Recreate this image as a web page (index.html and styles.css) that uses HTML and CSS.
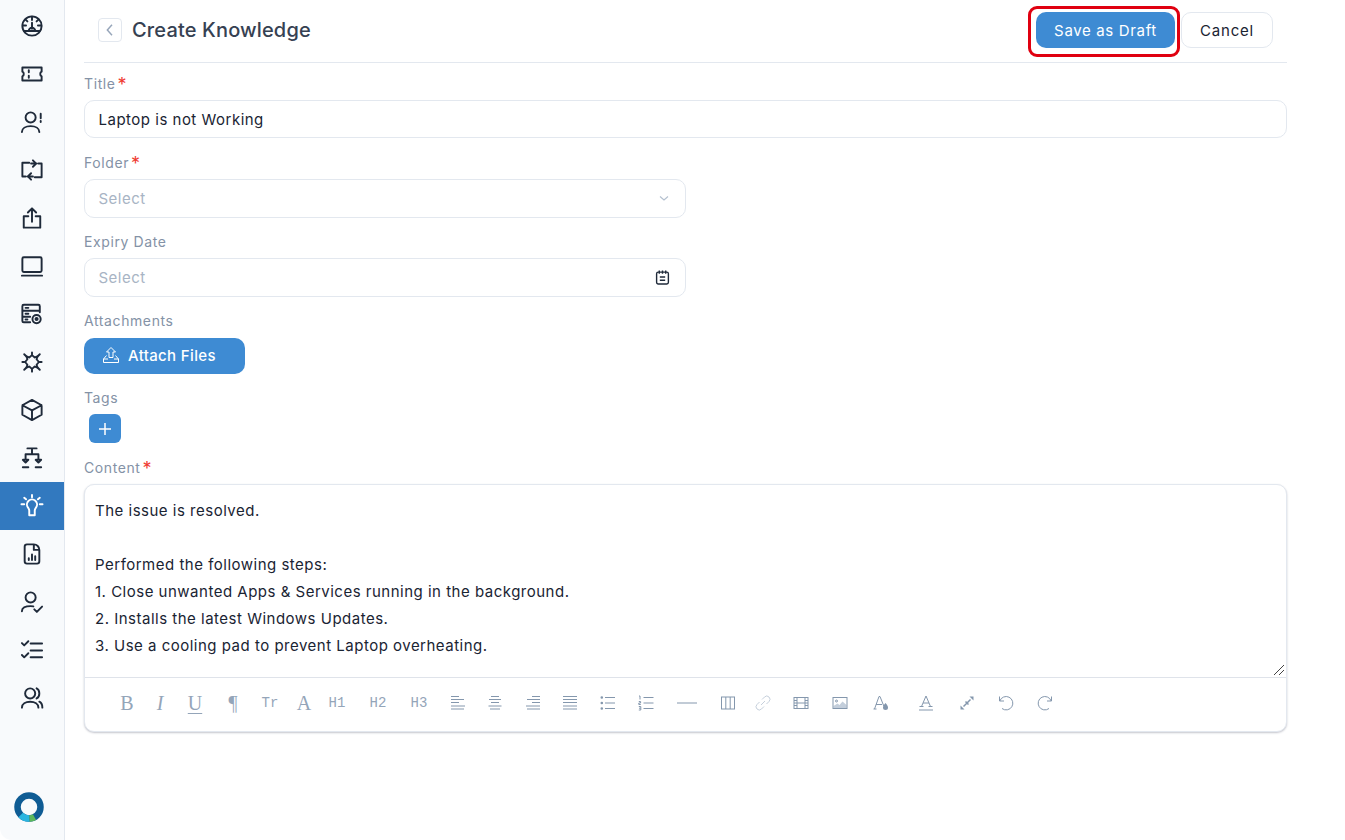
FILE: index.html
```html
<!DOCTYPE html>
<html lang="en">
<head>
<meta charset="utf-8">
<title>Create Knowledge</title>
<link rel="stylesheet" href="styles.css">
</head>
<body>
<div class="app">
  <nav class="sidebar">
    <ul class="nav-list">
      <li class="nav-item"><svg class="nav-icon" viewBox="0 0 24 24"><circle cx="12" cy="12" r="10.500"/><path d="M12 2v3.500M2 11.500h3.500M18.500 11.500H22M5 5l2 2M19 5l-2 2M12 8.500V15"/><path d="M3.500 17.500h17M8.500 17.500a3.500 3.500 0 0 1 7 0"/></svg></li>
      <li class="nav-item"><svg class="nav-icon" viewBox="0 0 24 24"><path d="M1.500 5h21v4.500a2.500 2.500 0 0 0-1.500 2.500 2.500 2.500 0 0 0 1.500 2.500V19h-21v-4.500A2.500 2.500 0 0 0 3 12a2.500 2.500 0 0 0-1.500-2.500z"/><path d="M8.500 8v2M8.500 14v2"/></svg></li>
      <li class="nav-item"><svg class="nav-icon" viewBox="0 0 24 24"><circle cx="10.500" cy="7" r="5.500"/><path d="M1 23c0-4 4-6.500 9.500-6.500S20 19 20 23M21.500 3v5M21.500 11v1"/></svg></li>
      <li class="nav-item"><svg class="nav-icon" viewBox="0 0 24 24"><path d="M9 4H1.500v15H5M15 20h7.500V5H19M11 5h6M13 1.500 16.500 5 13 8.500M13 19H7M11 15.500 7.500 19l3.500 3.500"/></svg></li>
      <li class="nav-item"><svg class="nav-icon" viewBox="0 0 24 24"><path d="M8 10H3v12.500h18V10h-5M12 16V1.500M7.500 6 12 1.500 16.500 6"/></svg></li>
      <li class="nav-item"><svg class="nav-icon" viewBox="0 0 24 24"><rect x="1.500" y="2.500" width="21" height="16" rx="1.500"/><path d="M1 22.500h22"/></svg></li>
      <li class="nav-item"><svg class="nav-icon" viewBox="0 0 24 24"><path d="M10 21H3a1.500 1.500 0 0 1-1.500-1.500v-16A1.500 1.500 0 0 1 3 2h16a1.500 1.500 0 0 1 1.500 1.500V10M1.500 8.500h19M1.500 15H10M5 5.300h3M5 11.800h3M5 18h2"/><circle cx="17" cy="17.500" r="1.200"/><circle cx="17" cy="17.500" r="4.500"/></svg></li>
      <li class="nav-item"><svg class="nav-icon" viewBox="0 0 24 24"><path d="M12 4.500 15 7l3-1-1 3 2.500 3-2.500 3 1 3-3-1-3 2.500L9 17l-3 1 1-3-2.500-3L7 9 6 6l3 1z"/><path d="M12 1.500v2M12 20.500v2M1.500 12h2M20.500 12h2M3.500 3.500 6 6M20.500 3.500 18 6M3.500 20.500 6 18M20.500 20.500 18 18"/></svg></li>
      <li class="nav-item"><svg class="nav-icon" viewBox="0 0 24 24"><path d="M12 1 22.500 6.800v10.400L12 23 1.500 17.200V6.800zM1.500 6.800 12 12.500 22.500 6.800M12 12.500V23"/></svg></li>
      <li class="nav-item"><svg class="nav-icon" viewBox="0 0 24 24"><path d="M7 1.500h10M12 1.500V8M5 13V8h14v5M2 14h6l-3 3zM16 14h6l-3 3zM2 22h6M16 22h6"/></svg></li>
      <li class="nav-item is-active"><svg class="nav-icon" viewBox="0 0 24 24"><path d="M7.500 13.500a5.500 5.500 0 1 1 9 0c-.9 1.200-1.500 2-1.500 3.500v5H9v-5c0-1.500-.6-2.300-1.500-3.500zM12 0v2.500M3.500 3l2 1.700M20.500 3l-2 1.700M.5 10h3M20.500 10h3"/></svg></li>
      <li class="nav-item"><svg class="nav-icon" viewBox="0 0 24 24"><path d="M14 1.500H6.500a2.500 2.500 0 0 0-2.500 2.500v16a2.500 2.500 0 0 0 2.500 2.500h11a2.500 2.500 0 0 0 2.500-2.500V7.500A6 6 0 0 0 14 1.500zM14 1.500V7.500h6M8.500 18.500v-2M12 18.500v-6M15.500 18.500v-4"/></svg></li>
      <li class="nav-item"><svg class="nav-icon" viewBox="0 0 24 24"><circle cx="10.500" cy="7" r="5.500"/><path d="M1 22c0-3.500 3.500-5.500 9.500-5.500 1 0 2 .1 3 .3M14.500 20l2.800 2.800 5.700-5.800"/></svg></li>
      <li class="nav-item"><svg class="nav-icon" viewBox="0 0 24 24"><path d="M10.500 5h12.500M10.500 12.500h12.500M10.500 20h12.500M1 4.500l2.500 2.500L8 2.500M1 17.500 3.500 20 8 15.500"/></svg></li>
      <li class="nav-item"><svg class="nav-icon" viewBox="0 0 24 24"><circle cx="10" cy="7" r="5.500"/><path d="M1 22.500c0-4 4-6.500 9-6.500s9 2.500 9 6.500M17 1.500c2 1 3 3 3 5.500s-1 4.500-3 5.500M20 16c2 1 3.300 3.500 3.300 6.500"/></svg></li>
    </ul>
    <svg class="logo" viewBox="0 0 30 30"><circle class="logo-dark" cx="15" cy="15" r="11.500"/><path class="logo-cyan" d="M6.700 23A11.500 11.500 0 0 0 15.500 26.500"/><path class="logo-green" d="M15.500 26.500A11.500 11.500 0 0 0 20.500 25.100"/></svg>
  </nav>

  <main class="main">
    <header class="page-head">
      <div class="head-left">
        <button class="back-btn" type="button"><svg viewBox="0 0 24 24"><path d="M15 4l-7 8 7 8"/></svg></button>
        <h1 class="page-title">Create Knowledge</h1>
      </div>
      <div class="head-actions">
        <div class="draft-wrap">
          <button class="btn btn-primary btn-draft" type="button">Save as Draft</button>
          <span class="highlight"></span>
        </div>
        <button class="btn btn-cancel" type="button">Cancel</button>
      </div>
    </header>

    <form class="form">
      <div class="field">
        <label class="label">Title<span class="req">*</span></label>
        <div class="input input-full"><span class="value">Laptop is not Working</span></div>
      </div>
      <div class="field">
        <label class="label">Folder<span class="req">*</span></label>
        <div class="input input-half"><span class="placeholder">Select</span>
          <svg class="chev" viewBox="0 0 12 12"><path d="M2 4.500l4 3.500 4-3.500"/></svg></div>
      </div>
      <div class="field">
        <label class="label">Expiry Date</label>
        <div class="input input-half"><span class="placeholder">Select</span>
          <svg class="cal" viewBox="0 0 14 14"><rect x="1.500" y="2" width="11" height="11" rx="1.500"/><path d="M4 .5v3M7 .5v3M10 .5v3M4.500 6.500h5M4.500 9.500h5"/></svg></div>
      </div>
      <div class="field field-attach">
        <label class="label">Attachments</label>
        <button class="btn btn-primary btn-attach" type="button">
          <svg viewBox="0 0 18 18"><path d="M9 1.500 4.500 6H7v5.500h4V6h2.500zM4.500 9.500 1.500 13v3.500h15V13l-3-3.500M1.500 13H6M12 13h4.500"/></svg>
          <span>Attach Files</span>
        </button>
      </div>
      <div class="field field-tags">
        <label class="label">Tags</label>
        <button class="btn-add" type="button"><svg viewBox="0 0 14 14"><path d="M7 1v12M1 7h12"/></svg></button>
      </div>
      <div class="field field-content">
        <label class="label">Content<span class="req">*</span></label>
        <div class="editor">
          <div class="editor-body">
            <p>The issue is resolved.</p>
            <p>&nbsp;</p>
            <p>Performed the following steps:</p>
            <p>1. Close unwanted Apps &amp; Services running in the background.</p>
            <p>2. Installs the latest Windows Updates.</p>
            <p>3. Use a cooling pad to prevent Laptop overheating.</p>
            <svg class="resize" viewBox="0 0 12 12"><path d="M1 11 11 1M6 11l5-5"/></svg>
          </div>
          <div class="toolbar">
            <span class="tool t-serif">B</span>
            <span class="tool s9 t-serif t-it">I</span>
            <span class="tool s11 t-serif t-un">U</span>
            <span class="tool s14 t-serif">¶</span>
            <span class="tool s13 t-mono">Tr</span>
            <span class="tool s10 t-serif">A</span>
            <span class="tool s9 t-mono">H1</span>
            <span class="tool s17 t-mono">H2</span>
            <span class="tool s17 t-mono">H3</span>
            <span class="tool s15"><svg viewBox="0 0 16 16"><path d="M1 1.500h8M1 4.500h13M1 7.500h8M1 11h14M1 14h13"/></svg></span>
            <span class="tool s13"><svg viewBox="0 0 16 16"><path d="M4 1.500h8M2 4.500h12M4 7.500h8M1.500 11h13M3 14h10"/></svg></span>
            <span class="tool s14"><svg viewBox="0 0 16 16"><path d="M7 1.500h8M2 4.500h13M7 7.500h8M1 11h14M2 14h13"/></svg></span>
            <span class="tool s13"><svg viewBox="0 0 16 16"><path d="M1 1.500h14M1 4.500h14M1 7.500h14M1 11h14M1 14h14"/></svg></span>
            <span class="tool s14"><svg viewBox="0 0 16 16"><path d="M5 2.500h10M5 8h10M5 13.500h10"/><path class="dots" d="M1.800 2.500h.01M1.800 8h.01M1.800 13.500h.01"/></svg></span>
            <span class="tool s14"><svg viewBox="0 0 16 16"><path d="M5.500 2.500h10M5.500 8h10M5.500 13.500h10M1 1h1v3.500M.8 6.500h1.800v1.500H.8v1.500h2M.8 11.500h2v3.500H.8M1 13.200h1.500"/></svg></span>
            <span class="tool s17 t-wide"><svg viewBox="0 0 20 16"><path d="M0 8h20"/></svg></span>
            <span class="tool s17"><svg viewBox="0 0 16 16"><rect x="1.500" y="2" width="13" height="12"/><path d="M5.800 2v12M10.200 2v12"/></svg></span>
            <span class="tool s11 t-dis"><svg viewBox="0 0 16 16"><path d="M6 10 10 6M7 4.500l2.500-2.500a3 3 0 0 1 4.500 4.500L11.500 9M9 11.500 6.500 14A3 3 0 0 1 2 9.500L4.500 7"/></svg></span>
            <span class="tool s14"><svg viewBox="0 0 16 16"><rect x="1" y="2.500" width="14" height="11"/><path d="M4 2.500v11M12 2.500v11M1 5.500h3M1 8h3M1 10.500h3M12 5.500h3M12 8h3M12 10.500h3M4 8h8"/></svg></span>
            <span class="tool s15"><svg viewBox="0 0 16 16"><path class="fill-soft" d="M1.500 13V11l4-2.500 2 1.500 3-3.500 4 3.500v3z"/><rect x="1" y="2.500" width="14" height="11"/><circle cx="4.500" cy="6" r="1"/></svg></span>
            <span class="tool s17"><svg viewBox="0 0 16 16"><path d="M1.500 14 6 1.500h1l4 10M3 9.500h6M.5 14h3"/><path class="fill" d="M12.500 8s-2.500 2.800-2.500 4.500a2.500 2.500 0 0 0 5 0c0-1.700-2.500-4.500-2.500-4.500z"/></svg></span>
            <span class="tool s21"><svg viewBox="0 0 16 16"><path d="M3.500 11.500 8 1l4.500 10.500M5 8h6M1.500 11.500h4M10.500 11.500h4M1 15h14"/></svg></span>
            <span class="tool s17"><svg viewBox="0 0 16 16"><path class="thick" d="M4.500 11.500 11.500 4.500M6.500 6.500l3 3"/><path class="fill" d="M1.500 10.500 1.500 14.500 5.500 14.500zM14.500 5.500 14.500 1.500 10.500 1.500z"/></svg></span>
            <span class="tool s15"><svg viewBox="0 0 16 16"><path d="M1.500 1.500v4.500H6M1.800 6A6.700 6.700 0 1 1 4 13.500"/></svg></span>
            <span class="tool s15"><svg viewBox="0 0 16 16"><path d="M14.500 1.500v4.500H10M14.200 6A6.700 6.700 0 1 0 12 13.500"/></svg></span>
          </div>
        </div>
      </div>
    </form>
  </main>
</div>
</body>
</html>
```

FILE: styles.css
```css
* { box-sizing: border-box; }
html, body { margin: 0; height: 100%; }
body {
  background: #fff;
  color: #1a2433;
  font-family: Inter, "Noto Sans", "Liberation Sans", sans-serif;
  font-size: 15px;
  overflow: hidden;
}
.app { display: flex; height: 840px; }

/* Sidebar */
.sidebar {
  width: 65px;
  flex: none;
  background: #f8fafc;
  border-right: 1px solid #e3e8ef;
  border-bottom-left-radius: 12px;
  display: flex;
  flex-direction: column;
  padding-top: 2px;
}
.nav-list { list-style: none; margin: 0; padding: 0; }
.nav-item {
  height: 48px;
  display: flex;
  align-items: center;
  padding-left: 21px;
  color: #1f2a3a;
}
.nav-item.is-active { background: #3279bf; color: #fff; }
.nav-icon {
  width: 22px;
  height: 22px;
  overflow: visible;
  fill: none;
  stroke: currentColor;
  stroke-width: 2.100;
  stroke-linecap: round;
  stroke-linejoin: round;
}
.logo { width: 30px; height: 30px; margin: auto 0 18px 14px; fill: none; stroke-width: 6.500; }
.logo-dark { stroke: #0f5c94; }
.logo-cyan { stroke: #2bb5e0; }
.logo-green { stroke: #5cb85c; }

/* Main */
.main { width: 1203px; margin-left: 19px; flex: none; }
.page-head {
  height: 63px;
  border-bottom: 1px solid #e3e8ef;
  display: flex;
  justify-content: space-between;
  padding: 12px 14px 0;
}
.head-left { display: flex; align-items: flex-start; padding-top: 6px; }
.back-btn {
  width: 24px;
  height: 24px;
  padding: 3px;
  margin: 0;
  background: #fff;
  border: 1px solid #e3e8ef;
  border-radius: 4px;
  display: flex;
}
.back-btn svg { fill: none; stroke: #97a6ba; stroke-width: 2.200; width: 16px; height: 16px; }
.page-title {
  margin: 0 0 0 10px;
  font-size: 20px;
  line-height: 24px;
  font-weight: 500;
  color: #364152;
  letter-spacing: .15px;
}
.head-actions { display: flex; gap: 6px; }
.draft-wrap { position: relative; }
.highlight {
  position: absolute;
  left: -8px;
  top: -6px;
  width: 152px;
  height: 51px;
  border: 3px solid #e00010;
  border-radius: 9px;
  pointer-events: none;
}
.btn {
  height: 36px;
  border: 0;
  border-radius: 10px;
  font: inherit;
  padding: 0;
}
.btn-primary { background: #3e8bd3; color: #fff; }
.btn-draft { width: 139px; letter-spacing: .65px; }
.btn-cancel { width: 92px; background: #fff; border: 1px solid #e3e8ef; color: #1a2433; letter-spacing: .8px; }

/* Form */
.form { padding-top: 10px; }
.field { margin-bottom: 13.500px; }
.label {
  display: block;
  height: 22px;
  line-height: 22px;
  margin-bottom: 5px;
  font-size: 14px;
  letter-spacing: .6px;
  color: #8492a6;
}
.req { color: #ef3b32; font-size: 18px; line-height: 18px; margin-left: 2px; position: relative; top: 2px; }
.input {
  height: 38.500px;
  background: #fff;
  border: 1px solid #e3e8ef;
  border-radius: 10px;
  padding: 0 13.500px;
  display: flex;
  align-items: center;
  justify-content: space-between;
  letter-spacing: .5px;
}
.input-full { height: 38px; margin-bottom: 14px; }
.field:first-child { margin-bottom: 0; }
.input-half { width: 602px; }
.placeholder { color: #a8b4c4; letter-spacing: .5px; }
.chev { width: 12px; height: 12px; margin-right: 2px; fill: none; stroke: #b4c0cf; stroke-width: 1.100; }
.cal { width: 15px; height: 15px; margin-right: 2px; fill: none; stroke: #1f2a3a; stroke-width: 1.300; }

.field-attach .label { margin-bottom: 6px; }
.field-attach { margin-bottom: 13px; }
.btn-attach {
  width: 161px;
  display: flex;
  align-items: center;
  padding: 0 0 2px 18px;
  gap: 8px;
  font-weight: 500;
  letter-spacing: .35px;
}
.btn-attach svg { width: 18px; height: 18px; fill: none; stroke: #fff; stroke-width: 1; }
.field-tags { margin-bottom: 14px; }
.btn-add {
  display: flex;
  align-items: center;
  justify-content: center;
  width: 32px;
  height: 29px;
  margin: 0 0 0 5px;
  padding: 0;
  border: 0;
  border-radius: 6px;
  background: #3e8bd3;
}
.btn-add svg { width: 14px; height: 14px; fill: none; stroke: #fff; stroke-width: 1.500; }

/* Editor */
.editor {
  height: 248px;
  background: #fff;
  border: 1px solid #e3e8ef;
  border-radius: 10px;
  box-shadow: 0 1px 2px rgba(60, 64, 90, .3);
  display: flex;
  flex-direction: column;
}
.editor-body {
  position: relative;
  height: 192px;
  padding: 12px 10px 0;
  line-height: 27px;
  font-size: 15px;
  letter-spacing: .5px;
  color: #1a2433;
}
.editor-body p { margin: 0; }
.resize {
  position: absolute;
  right: 1px;
  bottom: 1px;
  width: 12px;
  height: 12px;
  fill: none;
  stroke: #444;
  stroke-width: 1;
}
.toolbar {
  flex: 1;
  border-top: 1px solid #dfe3ea;
  display: flex;
  align-items: center;
  padding: 0 0 3px 30px;
  color: #94a5b9;
}
.tool {
  width: 24px;
  height: 24px;
  flex: none;
  display: flex;
  align-items: center;
  justify-content: center;
}
.tool svg { width: 16px; height: 16px; overflow: visible; fill: none; stroke: #8497ad; stroke-width: 1; }
.t-wide svg { width: 20px; }
.t-dis svg { stroke: #c6d0dc; }
.tool svg .dots { stroke-width: 2.600; stroke-linecap: round; }
.tool svg .fill { fill: #8497ad; stroke: none; }
.tool svg .fill-soft { fill: #c3cedb; stroke: none; }
.tool svg .thick { stroke-width: 1.500; }
.t-serif { font-family: "Liberation Serif", "DejaVu Serif", serif; font-size: 20px; }
.t-mono { font-family: "Liberation Mono", "DejaVu Sans Mono", monospace; font-size: 14px; }
.t-it { font-style: italic; }
.t-un { text-decoration: underline; text-decoration-thickness: 1px; text-underline-offset: 3px; }
.s9 { margin-left: 9px; }
.s10 { margin-left: 10px; }
.s11 { margin-left: 11px; }
.s13 { margin-left: 13px; }
.s14 { margin-left: 14px; }
.s15 { margin-left: 15px; }
.s17 { margin-left: 17px; }
.s21 { margin-left: 21px; }
```
